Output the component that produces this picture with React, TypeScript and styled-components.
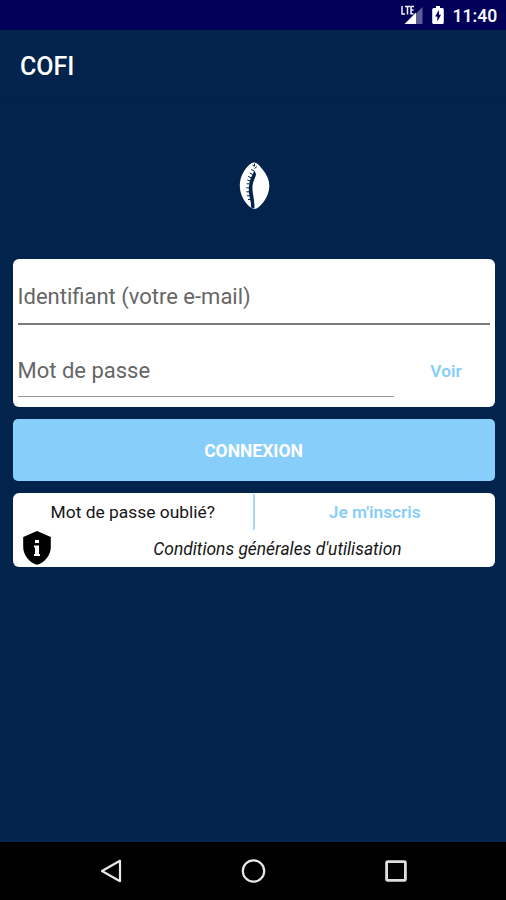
import React from 'react';
import styled, { createGlobalStyle } from 'styled-components';

const GlobalStyle = createGlobalStyle`
  * { box-sizing: border-box; }
  body { margin: 0; background: #02234b; }
`;

const Screen = styled.div`
  width: 506px;
  height: 900px;
  display: flex;
  flex-direction: column;
  overflow: hidden;
  background: #02234b;
  font-family: Roboto, 'Liberation Sans', sans-serif;
`;

const StatusBar = styled.header`
  height: 30px;
  flex: none;
  display: flex;
  justify-content: flex-end;
  align-items: flex-start;
  padding: 0 9px 0 0;
  background: #000058;
  color: #f4f4fb;
`;

const StatusIcon = styled.svg<{ $gap: number }>`
  display: block;
  flex: none;
  height: 30px;
  margin-right: ${(p) => p.$gap}px;
`;

const Clock = styled.time`
  font-size: 17.5px;
  font-weight: 600;
  line-height: 32px;
  width: 44.5px;
  white-space: nowrap;
`;

const AppBar = styled.div`
  height: 69px;
  flex: none;
  display: flex;
  align-items: center;
  padding: 5px 20px 0;
  border-bottom: 1px solid #03203f;
`;

const Title = styled.h1`
  margin: 0;
  color: #fff;
  font-size: 25px;
  font-weight: 500;
  line-height: 30px;
`;

const Content = styled.main`
  flex: 1;
  display: flex;
  flex-direction: column;
  padding: 0 11.5px 0 12.5px;
`;

const LogoArea = styled.div`
  height: 160px;
  flex: none;
  display: flex;
  justify-content: center;
  padding-top: 62px;
`;

const Card = styled.section<{ $height: number }>`
  height: ${(p) => p.$height}px;
  flex: none;
  border-radius: 6px;
  background: #fff;
`;

const Credentials = styled(Card)`
  display: flex;
  flex-direction: column;
  padding: 0 5px;
`;

const Field = styled.label<{ $strong?: boolean }>`
  display: flex;
  align-items: flex-end;
  height: 65.5px;
  padding-bottom: 12px;
  border-bottom: ${(p) => (p.$strong ? '2px solid #7b7b7b' : '1px solid #999')};
  color: #666;
  font-size: 22px;
  line-height: 28px;
  white-space: nowrap;
`;

const PasswordRow = styled.div`
  display: grid;
  grid-template-columns: 376px 1fr;
  height: 73px;

  ${Field} {
    height: 72px;
    padding-bottom: 11px;
  }
`;

const LinkButton = styled.button`
  border: 0;
  padding: 0;
  background: none;
  color: #87cefa;
  font: 600 17.3px/24px Roboto, sans-serif;
`;

const RevealButton = styled(LinkButton)`
  padding: 19px 0 0 9px;
`;

const SubmitButton = styled.button`
  height: 62px;
  flex: none;
  margin: 12px 0 11.5px;
  border: 0;
  border-radius: 5px;
  padding: 2px 0 0;
  background: #87cefa;
  color: #fff;
  font: 700 17.5px/24px Roboto, sans-serif;
`;

const LinksCard = styled(Card)`
  display: flex;
  flex-direction: column;
`;

const LinkRow = styled.div`
  display: grid;
  grid-template-columns: 240.5px 2px 1fr;
  height: 37px;
  padding-top: 1px;
`;

const ForgotLink = styled(LinkButton)`
  color: #161616;
  font-weight: 400;
  font-size: 17.4px;
`;

const Divider = styled.span`
  background: #a5d9f8;
`;

const TermsRow = styled.div`
  display: grid;
  grid-template-columns: 48px 1fr;
  height: 37px;
`;

const ShieldIcon = styled.svg`
  display: block;
  margin-left: 9.5px;
`;

const TermsLink = styled(LinkButton)`
  padding-top: 2px;
  color: #161616;
  font-weight: 400;
  font-style: italic;
  font-size: 17.4px;
`;

const NavBar = styled.nav`
  height: 58px;
  flex: none;
  display: grid;
  grid-template-columns: repeat(3, 142.5px);
  justify-content: center;
  justify-items: center;
  align-items: center;
  background: #000;
`;

const CowrieLogo = () => (
  <svg width="34" height="50" viewBox="0 0 34 50">
    <path
      d="M17.2 1.5C20 1.5 23 5 26 9C29.7 14 32.6 19 32.3 26C32 34 26 44 19.5 47.5C17.5 48.5 15 47.5 13 46C7 41 2.8 33 2.8 24.5C2.8 16 7 9 12 4C14 2.3 15.5 1.5 17.2 1.5Z"
      fill="#fff"
    />
    <path
      d="M17.5 9.5L19 13C18.8 16 16.5 19 15.6 24C14.7 31 17.8 38 17.5 47.5L14 46.5C14.5 41 12 36 11.8 30C11.7 24 12.5 18 15.5 13.5Z"
      fill="#02234b"
    />
    <path
      d="M15.5 4L17 5M17.5 2.5V5.5M20 5.5L17.5 7.5M14.2 8.5L17 10M12.8 12L15.8 13.5M11.2 15.3L14 16.8M10.3 19L13 20M9.7 22.8H12.5M9.3 26.8H12M9.3 30.8H12M9.8 34.8H12.8M11 38.5H14"
      stroke="#02234b"
      strokeWidth="1"
      fill="none"
    />
  </svg>
);

export default function App() {
  return (
    <Screen>
      <GlobalStyle />
      <StatusBar>
        <StatusIcon $gap={9} width="24" viewBox="0 0 24 30">
          <path d="M6.5 24L23.5 7V24Z" fill="#5d5d98" />
          <path d="M5.5 24L17 12.5V24Z" fill="#fff" />
          <path d="M3 6V14H6M6 6.6H11M8.5 6.6V14.5M15 6.6H12V13.8H14.5M12 10H14.5" stroke="#f4f4fb" strokeWidth="1.5" fill="none" />
        </StatusIcon>
        <StatusIcon $gap={8.5} width="12" viewBox="0 0 12 30">
          <path d="M4 6H8V8H10.3Q11.8 8 11.8 9.5V22.5Q11.8 24 10.3 24H1.7Q.2 24 .2 22.5V9.5Q.2 8 1.7 8H4Z" fill="#fff" />
          <path d="M7 10L3 16.5H5.3V21.5L9 14.8H7Z" fill="#000058" />
        </StatusIcon>
        <Clock>11:40</Clock>
      </StatusBar>

      <AppBar>
        <Title>COFI</Title>
      </AppBar>

      <Content>
        <LogoArea>
          <CowrieLogo />
        </LogoArea>

        <Credentials $height={148}>
          <Field $strong>Identifiant (votre e-mail)</Field>
          <PasswordRow>
            <Field>Mot de passe</Field>
            <RevealButton>Voir</RevealButton>
          </PasswordRow>
        </Credentials>

        <SubmitButton>CONNEXION</SubmitButton>

        <LinksCard $height={74.5}>
          <LinkRow>
            <ForgotLink>Mot de passe oublié?</ForgotLink>
            <Divider />
            <LinkButton>Je m'inscris</LinkButton>
          </LinkRow>
          <TermsRow>
            <ShieldIcon width="30" height="36" viewBox="0 0 30 36">
              <path d="M15 1L28.8 7V17C28.8 25 23 32.5 15 34.8C7 32.5 1.2 25 1.2 17V7Z" fill="#000" />
              <path d="M13 10H17V13H13ZM12 15.5H17V24H18V26H12V24H13V17.5H12Z" fill="#fff" />
            </ShieldIcon>
            <TermsLink>Conditions générales d'utilisation</TermsLink>
          </TermsRow>
        </LinksCard>
      </Content>

      <NavBar>
        <svg width="24" height="26" viewBox="0 0 24 26">
          <path d="M21 2.8V23.2L3 13Z" fill="none" stroke="#e8e8e8" strokeWidth="2.2" strokeLinejoin="round" />
        </svg>
        <svg width="26" height="26" viewBox="0 0 26 26">
          <circle cx="13.5" cy="13" r="10.7" fill="none" stroke="#e8e8e8" strokeWidth="2.2" />
        </svg>
        <svg width="24" height="24" viewBox="0 0 24 24">
          <rect x="2.6" y="2.6" width="18.8" height="18.8" rx="1" fill="none" stroke="#dedede" strokeWidth="2.8" />
        </svg>
      </NavBar>
    </Screen>
  );
}
